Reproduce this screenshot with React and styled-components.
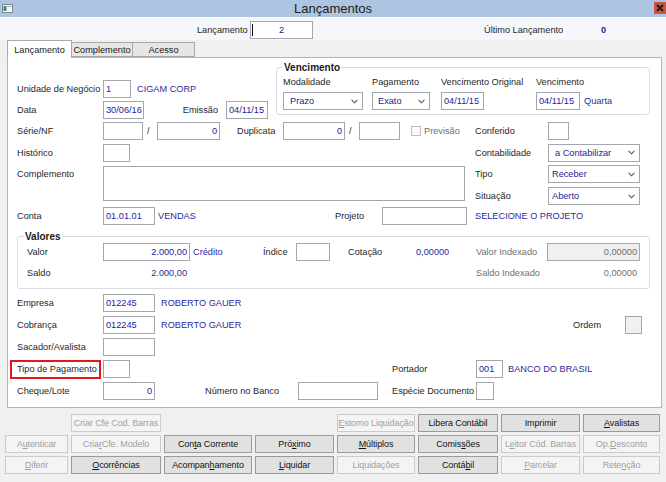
import React from 'react';
import styled, { createGlobalStyle } from 'styled-components';

const GlobalStyle = createGlobalStyle`
  html, body {
    margin: 0;
    padding: 0;
    background: #f0f0f0;
  }
  body {
    font-family: "Liberation Sans", Arial, sans-serif;
    font-size: 9.2px;
    color: #1f1f1f;
  }
`

const Window = styled.div`
  width: 666px;
  height: 482px;
  overflow: hidden;
  background: #f0f0f0;
  display: flex;
  flex-direction: column;
`

const TitleBar = styled.div`
  flex: none;
  height: 17px;
  display: grid;
  grid-template-columns: 1fr auto 1fr;
  align-items: center;
  background: #adc5e1;
`
const Title = styled.div`
  font-size: 13px;
  line-height: 17px;
  color: #1c1c1c;
`
const TitleIcon = styled.svg`
  margin-left: 2px;
  display: block;
`
const CloseBtn = styled.div`
  justify-self: end;
  align-self: start;
  width: 12px;
  height: 12px;
  margin-top: 2px;
  background: #c9543f;
  display: flex;
  align-items: center;
  justify-content: center;
`

const Header = styled.div`
  flex: none;
  height: 23px;
  box-sizing: border-box;
  padding-top: 4px;
  display: flex;
  align-items: flex-start;
  background: #f5f7fb;
  line-height: 18px;
`

const TabStrip = styled.div`
  flex: none;
  height: 17px;
  display: flex;
  align-items: flex-end;
  padding-left: 7px;
  position: relative;
  z-index: 1;
`
const Tab = styled.div`
  box-sizing: border-box;
  width: ${p => p.$w}px;
  height: ${p => (p.$active ? 18 : 15)}px;
  margin-bottom: ${p => (p.$active ? -1 : 0)}px;
  border: 1px solid #a9a9a9;
  border-bottom: ${p => (p.$active ? 'none' : '1px solid #a9a9a9')};
  border-left: ${p => (p.$first || p.$active ? '1px solid #a9a9a9' : 'none')};
  background: ${p => (p.$active ? '#ffffff' : '#e6e6e6')};
  display: flex;
  align-items: center;
  justify-content: center;
  color: #1a1a1a;
`

const Panel = styled.div`
  flex: none;
  margin-left: 7px;
  width: 655px;
  box-sizing: border-box;
  border: 1px solid #b4b4b4;
  background: #ffffff;
  padding: 4px 9px 5px 9px;
  display: flex;
  flex-direction: column;
`

const Row = styled.div`
  display: flex;
  align-items: ${p => p.$align || 'center'};
  height: ${p => p.$h || 22}px;
  margin-top: ${p => p.$mt || 0}px;
  flex: none;
`

const Label = styled.span`
  flex: none;
  box-sizing: border-box;
  width: ${p => (p.$w ? `${p.$w}px` : 'auto')};
  padding-left: ${p => p.$pl || 0}px;
  padding-right: ${p => p.$pr || 0}px;
  text-align: ${p => (p.$right ? 'right' : 'left')};
  color: ${p => (p.$muted ? '#707070' : '#1f1f1f')};
  font-weight: ${p => (p.$bold ? 'bold' : 'normal')};
  white-space: nowrap;
  overflow: hidden;
`

const Info = styled(Label)`
  color: #2b2ba0;
`

const Gap = styled.div`
  flex: none;
  width: ${p => p.$w}px;
`

const Box = styled.div`
  flex: none;
  position: relative;
  box-sizing: border-box;
  width: ${p => p.$w}px;
  height: ${p => p.$h || 18}px;
  margin-top: ${p => p.$mt || 0}px;
  border: 1px solid #a3a7ad;
  background: ${p => (p.$disabled ? '#f0f0f0' : '#ffffff')};
  color: ${p => (p.$disabled ? '#6d6d6d' : '#23239c')};
  display: flex;
  align-items: center;
  justify-content: ${p =>
    p.$align === 'right' ? 'flex-end' : p.$align === 'center' ? 'center' : 'flex-start'};
  padding: 0 2px;
  white-space: nowrap;
  overflow: hidden;
`

const Caret = styled.span`
  position: absolute;
  left: 1px;
  top: 2px;
  width: 1px;
  height: 12px;
  background: #111;
`

const SelectBox = styled(Box)`
  justify-content: space-between;
  padding: 0 4px 0 ${p => (p.$pl != null ? p.$pl : 4)}px;
`

const Chevron = () => (
  <svg width="7" height="5" viewBox="0 0 7 5">
    <path d="M0.6 0.8 L3.5 3.8 L6.4 0.8" fill="none" stroke="#555" strokeWidth="1.1" />
  </svg>
)

function Select({ w, pl, children }) {
  return (
    <SelectBox $w={w} $pl={pl}>
      <span>{children}</span>
      <Chevron />
    </SelectBox>
  )
}

const Check = styled.span`
  flex: none;
  box-sizing: border-box;
  width: 10px;
  height: 10px;
  border: 1px solid #bdbdbd;
  background: #fafafa;
  margin: 0 3px 0 11px;
`

const Group = styled.fieldset`
  margin: ${p => p.$mt || 0}px 0 0 0;
  box-sizing: border-box;
  width: ${p => p.$w}px;
  min-width: 0;
  border: 1px solid #d9dde2;
  border-radius: 3px;
  padding: 0 4px 4px ${p => p.$pl}px;
  flex: none;
`
const Legend = styled.legend`
  padding: 0 1px;
  margin-left: ${p => p.$ml || 0}px;
  font-weight: bold;
  font-size: 10px;
  line-height: 11px;
  color: #1a1a1a;
`

const Top = styled.div`
  display: flex;
  align-items: flex-start;
  flex: none;
`
const TopLeft = styled.div`
  width: 259px;
  flex: none;
  padding-top: 16px;
  display: flex;
  flex-direction: column;
`

const VencGrid = styled.div`
  display: grid;
  grid-template-columns: 89px 69px 95px auto;
  grid-template-rows: 18px 18px;
  row-gap: 1px;
  align-items: center;
`
const Cell = styled.div`
  display: flex;
  align-items: center;
`

const Complement = styled.div`
  display: flex;
  align-items: flex-start;
  height: 42px;
  flex: none;
`
const ComplementLabel = styled(Label)`
  margin-top: 6px;
`
const SideStack = styled.div`
  display: flex;
  flex-direction: column;
  gap: 4px;
  margin-top: 2px;
`

const Highlight = styled.span`
  flex: none;
  box-sizing: border-box;
  width: 91px;
  height: 19px;
  margin-left: -7px;
  margin-right: 2px;
  border: 2px solid #e3161e;
  padding-left: 5px;
  display: flex;
  align-items: center;
  white-space: nowrap;
`

const ButtonGrid = styled.div`
  margin-top: 6px;
  padding-left: 5px;
  display: grid;
  grid-template-columns: 63px 90px 88px 79px 78px 80px 79px 77px;
  grid-auto-rows: 18px;
  column-gap: 3px;
  row-gap: 3px;
  font-size: 9px;
`
const Btn = styled.div`
  box-sizing: border-box;
  border: 1px solid ${p => (p.$disabled ? '#cbcbcb' : '#9a9a9a')};
  background: ${p => (p.$disabled ? '#f4f4f4' : '#e1e1e1')};
  color: ${p => (p.$disabled ? '#a0a0a0' : '#111')};
  display: flex;
  align-items: center;
  justify-content: center;
  white-space: nowrap;
  overflow: hidden;
  letter-spacing: -0.1px;
`
const U = styled.span`
  text-decoration: underline;
`

function Caption({ text }) {
  const i = text.indexOf('&');
  if (i < 0) return text;
  return (
    <>
      {text.slice(0, i)}
      <U>{text[i + 1]}</U>
      {text.slice(i + 2)}
    </>
  )
}

const buttonRows = [
  [null, ['Criar Cfe Cod. Barras', true], null, null, ['&Estorno Liquidação', true], ['Libera Contábil'], ['Imprimir'], ['&Avalistas']],
  [['A&utenticar', true], ['Cria&r Cfe. Modelo', true], ['Con&ta Corrente'], ['Pró&ximo'], ['&Múltiplos'], ['Comis&sões'], ['L&eitor Cód. Barras', true], ['Op.&Desconto', true]],
  [['&Diferir', true], ['&Ocorrências'], ['Acompan&hamento'], ['&Liquidar'], ['Liquidações', true], ['Contá&bil'], ['&Parcelar', true], ['Rete&nção', true]],
]

export default function App() {
  return (
    <Window>
      <GlobalStyle />
      <TitleBar>
        <TitleIcon width="11" height="9" viewBox="0 0 11 9">
          <rect x="0.5" y="0.5" width="10" height="8" fill="#fbfbfb" stroke="#7b8794" />
          <rect x="1.5" y="2" width="3" height="5" fill="#3e8a5c" />
          <rect x="5.5" y="2" width="4" height="1" fill="#9aa6b2" />
        </TitleIcon>
        <Title>Lançamentos</Title>
        <CloseBtn>
          <svg width="8" height="8" viewBox="0 0 8 8">
            <path d="M1 1 L7 7 M7 1 L1 7" stroke="#1d1d1d" strokeWidth="1.8" />
          </svg>
        </CloseBtn>
      </TitleBar>

      <Header>
        <Gap $w={197} />
        <Label $w={53}>Lançamento</Label>
        <Box $w={63} $align="center">
          <Caret />2
        </Box>
        <Gap $w={171} />
        <Label $w={117}>Último Lançamento</Label>
        <Info $bold>0</Info>
      </Header>

      <TabStrip>
        <Tab $w={65} $active $first>Lançamento</Tab>
        <Tab $w={61}>Complemento</Tab>
        <Tab $w={62}>Acesso</Tab>
      </TabStrip>

      <Panel>
        <Top>
          <TopLeft>
            <Row $h={21}>
              <Label $w={86}>Unidade de Negócio</Label>
              <Box $w={28}>1</Box>
              <Info $pl={6}>CIGAM CORP</Info>
            </Row>
            <Row $h={21}>
              <Label $w={86}>Data</Label>
              <Box $w={41}>30/06/16</Box>
              <Label $w={82} $right $pr={8}>Emissão</Label>
              <Box $w={42}>04/11/15</Box>
            </Row>
          </TopLeft>
          <Group $w={374} $pl={6}>
            <Legend>Vencimento</Legend>
            <VencGrid>
              <Label>Modalidade</Label>
              <Label>Pagamento</Label>
              <Label>Vencimento Original</Label>
              <Label>Vencimento</Label>
              <Select w={80} pl={6}>Prazo</Select>
              <Select w={58} pl={5}>Exato</Select>
              <Box $w={43}>04/11/15</Box>
              <Cell>
                <Box $w={44}>04/11/15</Box>
                <Info $pl={4}>Quarta</Info>
              </Cell>
            </VencGrid>
          </Group>
        </Top>

        <Row $h={22}>
          <Label $w={86}>Série/NF</Label>
          <Box $w={40} />
          <Label $w={14} $pl={4}>/</Label>
          <Box $w={63} $align="right">0</Box>
          <Label $w={63} $pl={17}>Duplicata</Label>
          <Box $w={62} $align="right">0</Box>
          <Label $w={14} $pl={4}>/</Label>
          <Box $w={41} />
          <Check />
          <Label $w={51} $muted>Previsão</Label>
          <Label $w={73}>Conferido</Label>
          <Box $w={21} />
        </Row>

        <Row $h={21}>
          <Label $w={86}>Histórico</Label>
          <Box $w={27} />
          <Gap $w={345} />
          <Label $w={73}>Contabilidade</Label>
          <Select w={92} pl={6}>a Contabilizar</Select>
        </Row>

        <Complement>
          <ComplementLabel $w={86}>Complemento</ComplementLabel>
          <Box $w={362} $h={35} $mt={3} />
          <Gap $w={10} />
          <SideStack>
            <Cell>
              <Label $w={73}>Tipo</Label>
              <Select w={92} pl={3}>Receber</Select>
            </Cell>
            <Cell>
              <Label $w={73}>Situação</Label>
              <Select w={92} pl={3}>Aberto</Select>
            </Cell>
          </SideStack>
        </Complement>

        <Row $h={21}>
          <Label $w={86}>Conta</Label>
          <Box $w={52}>01.01.01</Box>
          <Info $w={180} $pl={3}>VENDAS</Info>
          <Label $w={47}>Projeto</Label>
          <Box $w={85} />
          <Info $pl={8}>SELECIONE O PROJETO</Info>
        </Row>

        <Group $w={633} $pl={9} $mt={5}>
          <Legend $ml={-3}>Valores</Legend>
          <Row $h={20}>
            <Label $w={76}>Valor</Label>
            <Box $w={87} $align="right">2.000,00</Box>
            <Info $w={70} $pl={3}>Crédito</Info>
            <Label $w={36} $pl={3}>Índice</Label>
            <Box $w={34} />
            <Label $w={86} $pl={18}>Cotação</Label>
            <Info $w={60}>0,00000</Info>
            <Label $w={71} $muted>Valor Indexado</Label>
            <Box $w={93} $align="right" $disabled>0,00000</Box>
          </Row>
          <Row $h={22}>
            <Label $w={76}>Saldo</Label>
            <Info $w={87} $right $pr={3}>2.000,00</Info>
            <Gap $w={286} />
            <Label $w={71} $muted>Saldo Indexado</Label>
            <Label $w={93} $right $pr={3} $muted>0,00000</Label>
          </Row>
        </Group>

        <Row $h={22} $mt={3}>
          <Label $w={86}>Empresa</Label>
          <Box $w={52}>012245</Box>
          <Info $pl={6}>ROBERTO GAUER</Info>
        </Row>
        <Row $h={22}>
          <Label $w={86}>Cobrança</Label>
          <Box $w={52}>012245</Box>
          <Info $w={418} $pl={6}>ROBERTO GAUER</Info>
          <Label $w={52}>Ordem</Label>
          <Box $w={17} $disabled />
        </Row>
        <Row $h={22}>
          <Label $w={86}>Sacador/Avalista</Label>
          <Box $w={52} />
        </Row>
        <Row $h={22}>
          <Highlight>Tipo de Pagamento</Highlight>
          <Box $w={27} />
          <Gap $w={262} />
          <Label $w={84}>Portador</Label>
          <Box $w={27}>001</Box>
          <Info $pl={5}>BANCO DO BRASIL</Info>
        </Row>
        <Row $h={22}>
          <Label $w={86}>Cheque/Lote</Label>
          <Box $w={52} $align="right">0</Box>
          <Label $w={143} $pl={50}>Número no Banco</Label>
          <Box $w={80} />
          <Label $w={98} $pl={14}>Espécie Documento</Label>
          <Box $w={18} />
        </Row>
      </Panel>

      <ButtonGrid>
        {buttonRows.flatMap((row, r) =>
          row.map((b, c) =>
            b ? (
              <Btn key={`${r}-${c}`} $disabled={!!b[1]}>
                <Caption text={b[0]} />
              </Btn>
            ) : (
              <span key={`${r}-${c}`} />
            )
          )
        )}
      </ButtonGrid>
    </Window>
  )
}
